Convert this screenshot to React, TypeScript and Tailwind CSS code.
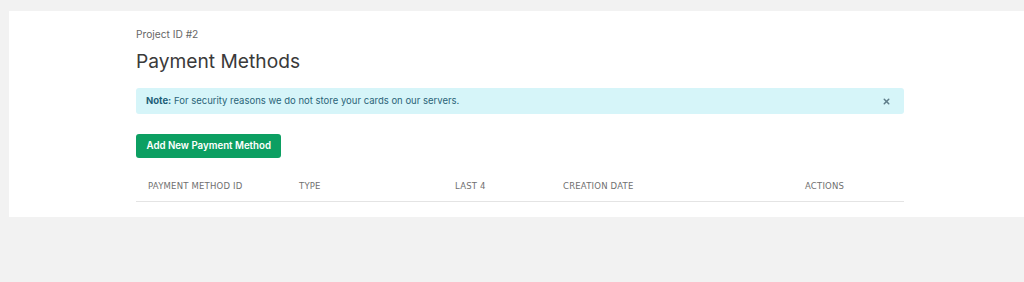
import { X } from "lucide-react";

const columns = ["Payment Method ID", "Type", "Last 4", "Creation Date", "Actions"];

const PaymentMethods = () => {
  return (
    <div className="ml-[9px] mt-[11px] bg-white pl-[127px] pr-[120px] pt-[15px] pb-[15px]">
      <div className="w-[768px]">
        <p className="text-[10.2px] leading-4 text-[#666]">Project ID #2</p>
        <h1 className="mt-[5px] text-[19.2px] leading-7 text-[#3a3a3a]">Payment Methods</h1>

        <div className="mt-[13px] flex h-[26px] items-center justify-between rounded-[3px] bg-[#d6f5f9] pl-[10px] pr-[13px] text-[9.5px] text-[#2a6478]">
          <p>
            <span className="font-bold text-[#1d5f78]">Note:</span> For security reasons we do not
            store your cards on our servers.
          </p>
          <X className="h-[9px] w-[9px] text-[#5f7d8a]" strokeWidth={4} />
        </div>

        <button className="mt-5 h-6 rounded-[3px] bg-[#0c9f62] px-[10.5px] text-[9.7px] font-semibold text-white">
          Add New Payment Method
        </button>

        <div className="mt-[13px] grid h-[31px] grid-cols-[151px_156px_108px_242px_1fr] items-center border-b border-[#e4e4e4] px-3 font-['DejaVu_Sans',sans-serif] text-[8.5px] uppercase tracking-[0.2px] text-[#707070]">
          {columns.map((c) => (
            <div key={c}>{c}</div>
          ))}
        </div>
      </div>
    </div>
  );
};

export default function App() {
  return (
    <div className="h-[282px] overflow-hidden bg-[#f2f2f2] font-['Inter',sans-serif]">
      <PaymentMethods />
    </div>
  );
}
